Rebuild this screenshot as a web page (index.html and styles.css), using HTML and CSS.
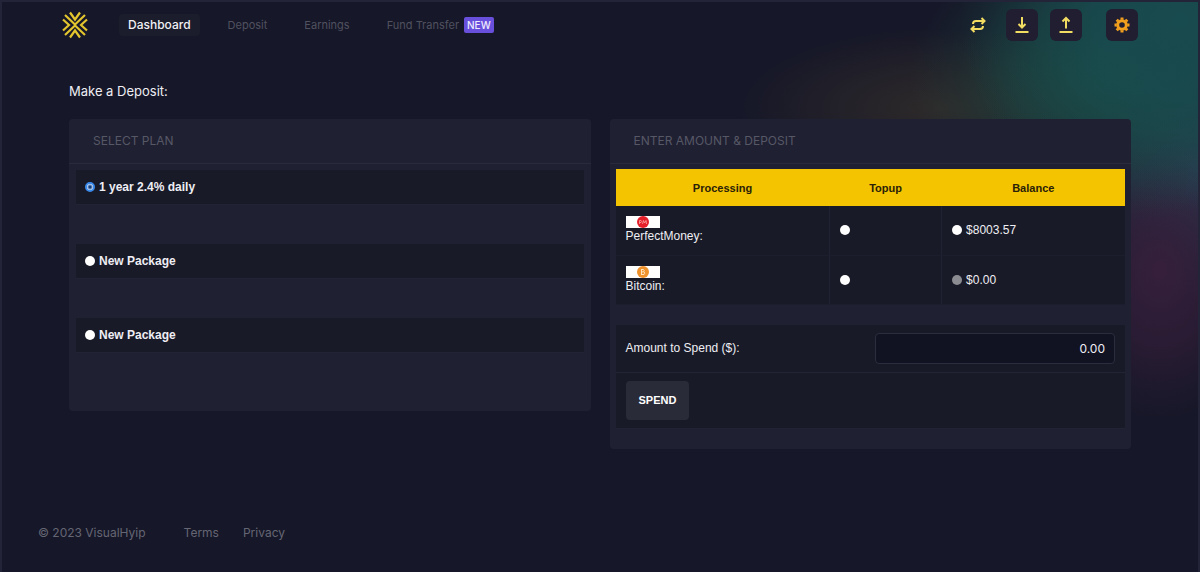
FILE: index.html
```html
<!DOCTYPE html>
<html lang="en">
<head>
<meta charset="utf-8">
<meta name="viewport" content="width=device-width, initial-scale=1">
<title>Make a Deposit</title>
<link rel="stylesheet" href="styles.css">
</head>
<body>
<header class="topbar">
  <a class="logo" href="#" aria-label="VisualHyip home">
    <svg width="26" height="28" viewBox="0 0 26 28" fill="none" stroke="#e3c62e" stroke-width="2.200">
      <path d="M8 1.500l5 7 5-7M8 26.500l5-7 5 7"/>
      <path d="M3 4l10 9.500L23 4M3 24l10-9.500L23 24"/>
      <path d="M1 8.500L7 14l-6 5.500M25 8.500L19 14l6 5.500"/>
    </svg>
  </a>
  <nav class="nav">
    <a class="nav-link active" href="#">Dashboard</a>
    <a class="nav-link" href="#">Deposit</a>
    <a class="nav-link" href="#">Earnings</a>
    <a class="nav-link" href="#">Fund Transfer <span class="badge">NEW</span></a>
  </nav>
  <div class="actions">
    <button class="icon-btn plain" type="button" aria-label="Exchange">
      <svg width="18" height="18" viewBox="0 0 18 18"><path d="M4 8q0-3 3-3h8.500M12.500 2l3 3-3 3M14 10q0 3-3 3H2.500M5.500 10l-3 3 3 3"/></svg>
    </button>
    <button class="icon-btn" type="button" aria-label="Deposit funds">
      <svg width="18" height="18" viewBox="0 0 18 18"><path d="M9 1v10M5.500 8L9 11.500 12.500 8M2.500 16h13"/></svg>
    </button>
    <button class="icon-btn" type="button" aria-label="Withdraw funds">
      <svg width="18" height="18" viewBox="0 0 18 18"><path d="M9 12.500V2.500M5.500 5.500L9 2l3.500 3.500M2.500 16h13"/></svg>
    </button>
    <button class="icon-btn settings" type="button" aria-label="Settings">
      <svg width="18" height="18" viewBox="0 0 18 18"><circle cx="9" cy="9" r="4.300"/><path d="M9 1.500v2.200M9 14.300v2.200M1.500 9h2.200M14.300 9h2.200M3.700 3.700l1.600 1.600M12.700 12.700l1.600 1.600M14.300 3.700l-1.600 1.600M5.300 12.700l-1.600 1.600"/></svg>
    </button>
  </div>
</header>

<main class="content">
  <h1 class="title">Make a Deposit:</h1>
  <form class="cards">
    <section class="card">
      <h2 class="card-head">SELECT PLAN</h2>
      <div class="plans">
        <label class="plan"><input class="radio" type="radio" name="plan" checked>1 year 2.4% daily</label>
        <label class="plan"><input class="radio" type="radio" name="plan">New Package</label>
        <label class="plan"><input class="radio" type="radio" name="plan">New Package</label>
      </div>
    </section>

    <section class="card">
      <h2 class="card-head">ENTER AMOUNT &amp; DEPOSIT</h2>
      <div class="deposit">
        <table class="methods">
          <thead>
            <tr><th class="col-processing">Processing</th><th class="col-topup">Topup</th><th>Balance</th></tr>
          </thead>
          <tbody>
            <tr>
              <td>
                <svg class="pay" width="34" height="12" viewBox="0 0 34 12" aria-hidden="true"><rect width="34" height="12" fill="#fff"/><circle cx="17" cy="6" r="6" fill="#e5202b"/><path d="M13.500 8V4.500h1.500q1.200 1 0 2h-1.500M16.500 8l1-3.500 1 2.500 1.500-2.500.5 3.500" fill="none" stroke="#f7a3a3" stroke-width=".8"/></svg>
                PerfectMoney:
              </td>
              <td><input class="radio" type="radio" name="method" aria-label="Topup with PerfectMoney"></td>
              <td><label class="option"><input class="radio" type="radio" name="method">$8003.57</label></td>
            </tr>
            <tr>
              <td>
                <svg class="pay" width="34" height="12" viewBox="0 0 34 12" aria-hidden="true"><rect width="34" height="12" fill="#fff"/><circle cx="17" cy="6" r="6" fill="#f0922b"/><path d="M15.500 3v6M15 3.500h2.500q1.500 1.200 0 2.400h-2M15 8.500h3q1.500-1.300 0-2.600" fill="none" stroke="#ffe3bd" stroke-width="1"/></svg>
                Bitcoin:
              </td>
              <td><input class="radio" type="radio" name="method" aria-label="Topup with Bitcoin"></td>
              <td><label class="option"><input class="radio" type="radio" name="method" disabled>$0.00</label></td>
            </tr>
          </tbody>
        </table>
        <div class="spend">
          <div class="spend-row">
            <label for="amount">Amount to Spend ($):</label>
            <input class="amount" id="amount" type="text" value="0.00">
          </div>
          <div class="spend-row submit">
            <button class="spend-btn" type="button">SPEND</button>
          </div>
        </div>
      </div>
    </section>
  </form>
</main>

<footer class="footer">
  <span>© 2023 VisualHyip</span>
  <nav class="footer-links"><a href="#">Terms</a><a href="#">Privacy</a></nav>
</footer>
</body>
</html>
```
FILE: styles.css
```css
* { box-sizing: border-box; }

body {
  margin: 0;
  min-height: 100vh;
  display: flex;
  flex-direction: column;
  border: 2px solid #232437;
  border-bottom: 0;
  background:
    radial-gradient(ellipse 220px 190px at calc(100% - 20px) 20px, #184b4f 0, #184b4fcc 40%, #184b4f44 75%, transparent 100%),
    radial-gradient(ellipse 200px 150px at calc(100% - 90px) 75px, #1c4c44 0, #1c4c4499 45%, #1c4c4433 75%, transparent 100%),
    radial-gradient(ellipse 200px 80px at calc(100% - 260px) 108px, #2e2a2a 0, #2e2a2a88 50%, transparent 100%),
    radial-gradient(ellipse 110px 150px at calc(100% - 40px) 270px, #361f3b 0, #361f3b99 50%, transparent 100%),
    radial-gradient(ellipse 120px 130px at 100% 170px, #29425a 0, #29425a88 50%, transparent 100%),
    #161728;
  color: #eeeef4;
  font: 12px/16px "Liberation Sans", Arial, sans-serif;
}

a { color: inherit; text-decoration: none; }
svg { display: block; }
button, input { font: inherit; margin: 0; }

.topbar {
  display: flex;
  align-items: center;
  padding: 7px 60px 0;
}
.logo { margin-right: 31px; }
.nav {
  display: flex;
  gap: 19px;
  font: 11px/16px Inter, "Open Sans", sans-serif;
  color: #50515f;
}
.nav-link {
  display: flex;
  gap: 5px;
  padding: 3px 9px;
  border-radius: 4px;
}
.nav-link.active {
  background: #1b1c2c;
  color: #f1f1f5;
  font-weight: 500;
  font-size: 12px;
}
.badge {
  padding: 0 3px;
  border-radius: 2px;
  background: #6950dc;
  color: #eeeaff;
  font-size: 10px;
  font-weight: 500;
}
.actions {
  display: flex;
  gap: 12px;
  margin-left: auto;
}
.icon-btn {
  width: 32px;
  height: 32px;
  display: grid;
  place-items: center;
  padding: 0;
  border: 0;
  border-radius: 6px;
  background: #201e30;
  fill: none;
  stroke: #f2dc62;
  stroke-width: 2;
}
.icon-btn.plain { background: none; }
.icon-btn.settings { margin-left: 12px; stroke: #f3a01f; stroke-width: 3; }

.content { padding: 0 67px; }
.title {
  margin: 40px 0 18px;
  font: 13px/20px Inter, "Open Sans", sans-serif;
}
.cards {
  display: grid;
  grid-template-columns: 1fr 1fr;
  gap: 19px;
  align-items: start;
}
.card {
  border-radius: 4px;
  background: #1f2032;
}
.card-head {
  margin: 0;
  padding: 12px 24px;
  border-bottom: 1px solid #292a3b;
  color: #575866;
  font: 12px/20px Inter, "Open Sans", sans-serif;
}

.plans {
  display: grid;
  gap: 39px;
  padding: 6px 7px 58px;
}
.plan {
  display: flex;
  align-items: center;
  gap: 4px;
  height: 35px;
  padding: 0 9px;
  border-bottom: 1px solid #222334;
  background: #191a27;
  font-weight: bold;
}
.radio {
  appearance: none;
  display: block;
  flex: none;
  width: 10px;
  height: 10px;
  border-radius: 50%;
  background: #fff;
}
.radio:checked {
  border: 2px solid #3a8aec;
  background: radial-gradient(circle, #123e7c 0 1px, #d9e9ff 3px);
}
.radio:disabled { background: #8b8b92; }

.deposit { padding: 5px 6px 20px; }
.methods {
  width: 100%;
  border-collapse: collapse;
  table-layout: fixed;
}
.methods th {
  height: 37px;
  padding: 0;
  background: #f4c400;
  color: #2a2108;
  font-size: 11px;
}
.col-processing { width: 42%; }
.col-topup { width: 22%; }
.methods td {
  height: 49px;
  padding: 0 10px;
  border-bottom: 1px solid #1d1e2d;
  background: #191a27;
}
.methods td + td { border-left: 1px solid #202132; }
.option {
  display: flex;
  align-items: center;
  gap: 4px;
}

.spend {
  margin-top: 20px;
  background: #191a27;
}
.spend-row {
  display: flex;
  align-items: center;
  justify-content: space-between;
  padding: 8px 10px;
  border-bottom: 1px solid #222334;
}
.amount {
  width: 49%;
  height: 31px;
  padding: 0 9px;
  border: 1px solid #2b2c3d;
  border-radius: 4px;
  background: #111222;
  color: #eeeef4;
  font-family: Inter, "Open Sans", sans-serif;
  text-align: right;
}
.spend-btn {
  height: 39px;
  padding: 0 13px;
  border: 0;
  border-radius: 4px;
  background: #2a2b38;
  color: #fff;
  font-size: 11px;
  font-weight: bold;
}

.footer {
  display: flex;
  gap: 38px;
  margin-top: auto;
  padding: 0 36px 29px;
  color: #656674;
  font: 12px/20px Inter, "Open Sans", sans-serif;
}
.footer-links { display: flex; gap: 24px; }
```
